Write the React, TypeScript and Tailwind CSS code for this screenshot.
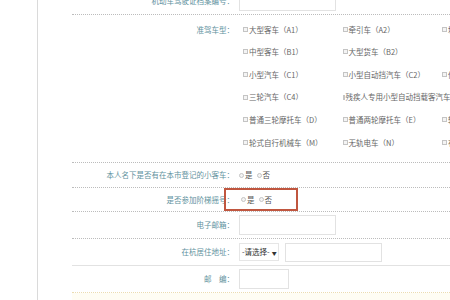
const licenceTypes: string[][] = [
  ["大型客车（A1）", "牵引车（A2）", "城市公交车（A3）"],
  ["中型客车（B1）", "大型货车（B2）"],
  ["小型汽车（C1）", "小型自动挡汽车（C2）", "低速载货汽车（C3）"],
  ["三轮汽车（C4）", "残疾人专用小型自动挡载客汽车（C5）"],
  ["普通三轮摩托车（D）", "普通两轮摩托车（E）", "轻便摩托车（F）"],
  ["轮式自行机械车（M）", "无轨电车（N）", "有轨电车（P）"],
];

const Label = ({ text }: { text: string }) => (
  <div className="w-[163px] shrink-0 text-right text-[#5f929e] pr-[1px]">{text}</div>
);

const Box = () => (
  <span className="inline-block w-[5px] h-[5px] border border-[#c4c4c4] bg-[#f4f4f4] mr-[1px] align-middle" />
);

const Dot = () => (
  <span className="inline-block w-[5px] h-[5px] rounded-full border border-[#c4c4c4] bg-[#f4f4f4] mr-[1px] align-middle" />
);

const YesNo = () => (
  <div className="flex items-center text-[#555]">
    <Dot />
    <span>是</span>
    <span className="ml-[4px]" />
    <Dot />
    <span>否</span>
  </div>
);

export default function App() {
  return (
    <div
      className="w-[450px] h-[300px] overflow-hidden bg-white flex text-[7.5px] leading-none whitespace-nowrap"
      style={{ fontFamily: '"Noto Sans CJK SC", "Noto Sans", sans-serif' }}
    >
      {/* left frame line */}
      <div className="w-[38px] shrink-0 border-r border-[#dadada]" />

      <div className="flex-1 pl-[34px] flex flex-col min-w-0">
        {/* 档案编号 */}
        <div className="-mt-[12px] h-[27px] shrink-0 flex items-center border-b border-dotted border-[#bcbcbc]">
          <Label text="机动车驾驶证档案编号：" />
          <div className="ml-[4px] w-[97px] h-[20px] border border-[#e2e2e2]" />
        </div>

        {/* 准驾车型 */}
        <div className="h-[148px] shrink-0 flex border-b border-dotted border-[#bcbcbc] pt-[3px]">
          <div className="h-[22.6px] flex items-center">
            <Label text="准驾车型：" />
          </div>
          <div className="ml-[8px] flex flex-col text-[#666]">
            {licenceTypes.map((row, i) => (
              <div key={i} className="h-[22.6px] flex items-center">
                {row.map((item, j) => (
                  <div key={j} className="w-[99.5px] shrink-0 flex items-center">
                    <Box />
                    <span>{item}</span>
                  </div>
                ))}
              </div>
            ))}
          </div>
        </div>

        {/* 小客车 */}
        <div className="h-[25px] shrink-0 flex items-center border-b border-dotted border-[#bcbcbc]">
          <Label text="本人名下是否有在本市登记的小客车：" />
          <div className="ml-[4px]">
            <YesNo />
          </div>
        </div>

        {/* 阶梯摇号 */}
        <div className="relative h-[24px] shrink-0 flex items-center border-b border-dotted border-[#bcbcbc]">
          <Label text="是否参加阶梯摇号：" />
          <div className="ml-[6px]">
            <YesNo />
          </div>
          <div className="absolute left-[152px] top-[0px] w-[74px] h-[23px] border-2 border-[#c0563f]" />
        </div>

        {/* 电子邮箱 */}
        <div className="h-[27px] shrink-0 flex items-center border-b border-dotted border-[#bcbcbc]">
          <Label text="电子邮箱：" />
          <div className="ml-[4px] w-[97px] h-[20px] border border-[#e2e2e2]" />
        </div>

        {/* 居住地址 */}
        <div className="h-[27px] shrink-0 flex items-center border-b border-[#e2e2e2]">
          <Label text="在杭居住地址：" />
          <div className="ml-[4px] w-[40px] h-[18px] border border-[#e6e6e6] flex items-center pl-[2px] text-[#333]">
            <span>-请选择-</span>
            <span className="ml-[2px] text-[5px]">▼</span>
          </div>
          <div className="ml-[6px] w-[97px] h-[19px] border border-[#e2e2e2]" />
        </div>

        {/* 邮编 */}
        <div className="h-[27px] shrink-0 flex items-center border-b border-dotted border-[#ecdcb0]">
          <Label text="邮　编：" />
          <div className="ml-[4px] w-[50px] h-[20px] border border-[#e2e2e2]" />
        </div>

        <div className="flex-1 bg-[#fffdf4]" />
      </div>
    </div>
  );
}
